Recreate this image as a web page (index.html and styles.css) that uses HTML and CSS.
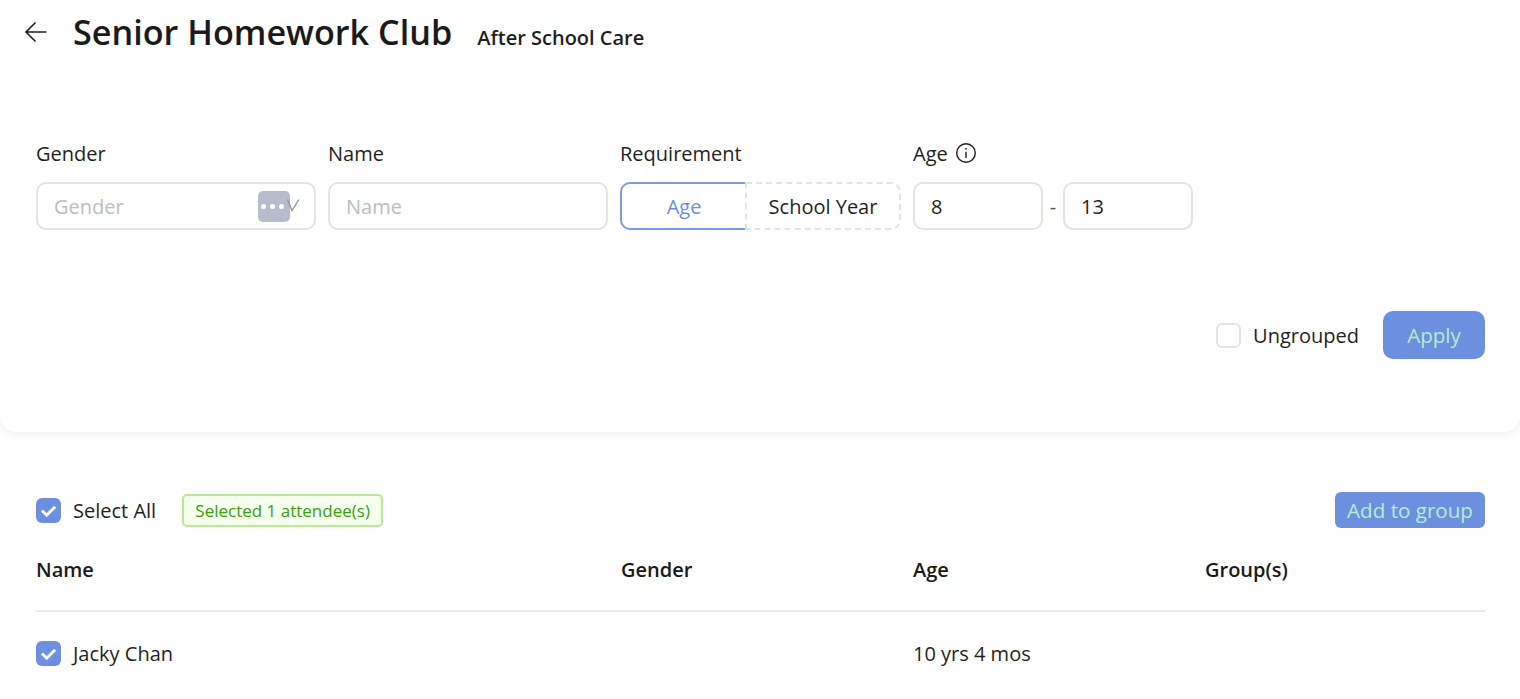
FILE: index.html
```html
<!DOCTYPE html>
<html>
  <head>
    <meta charset="utf-8">
    <title>Senior Homework Club</title>
    <link rel="stylesheet" href="styles.css">
  </head>
  <body>

    <section class="FilterCard">
      <header class="PageHead">
        <a href="#" class="PageHead-back" aria-label="Back">
          <svg width="24" height="24" viewBox="0 0 24 24" fill="none" stroke="#1f1f1f" stroke-width="1.6">
            <path d="M22.5 12H2M11.5 2.5L2 12l9.500 9.500" />
          </svg>
        </a>
        <h1>Senior Homework Club</h1>
        <span class="PageHead-sub">After School Care</span>
      </header>

      <div class="Filters">
        <div class="Field">
          <label>Gender</label>
          <div class="Input Input-select">
            <span class="Input-placeholder">Gender</span>
            <span class="Input-dots"><i></i><i></i><i></i></span>
            <svg class="Input-chevron" width="14" height="14" viewBox="0 0 14 14" fill="none" stroke="#8f93a0" stroke-width="1.3">
              <path d="M1.500 1.500L6 12.500 13 1.500" />
            </svg>
          </div>
        </div>
        <div class="Field">
          <label>Name</label>
          <div class="Input"><span class="Input-placeholder">Name</span></div>
        </div>
        <div class="Field">
          <label>Requirement</label>
          <div class="Toggle">
            <span class="Toggle-item Toggle-item-on">Age</span>
            <span class="Toggle-item">School Year</span>
          </div>
        </div>
        <div class="Field">
          <label>Age
            <svg width="22" height="22" viewBox="0 0 22 22" fill="none" stroke="#1f1f1f" stroke-width="1.4">
              <circle cx="11" cy="11" r="9.300" />
              <path d="M11 9.800v6.200" />
              <path d="M11 6v1.800" />
            </svg>
          </label>
          <div class="AgeRange">
            <div class="Input">8</div>
            <span class="AgeRange-dash">-</span>
            <div class="Input">13</div>
          </div>
        </div>
      </div>

      <div class="FilterActions">
        <span class="Check">
          <span class="Check-box"></span>
          Ungrouped
        </span>
        <button class="Btn Btn-apply">Apply</button>
      </div>
    </section>

    <section class="Attendees">
      <div class="Toolbar">
        <span class="Check">
          <span class="Check-box Check-box-on">
            <svg width="25" height="25" viewBox="0 0 25 25" fill="none" stroke="#fff" stroke-width="3"><path d="M6 12.500l4.700 4.700 8.500-8.500" /></svg>
          </span>
          Select All
        </span>
        <span class="Badge">Selected 1 attendee(s)</span>
        <button class="Btn Btn-add">Add to group</button>
      </div>

      <div class="Row Row-head">
        <span>Name</span>
        <span>Gender</span>
        <span>Age</span>
        <span>Group(s)</span>
      </div>
      <div class="Row">
        <span class="Check">
          <span class="Check-box Check-box-on">
            <svg width="25" height="25" viewBox="0 0 25 25" fill="none" stroke="#fff" stroke-width="3"><path d="M6 12.500l4.700 4.700 8.500-8.500" /></svg>
          </span>
          Jacky Chan
        </span>
        <span></span>
        <span>10 yrs 4 mos</span>
        <span></span>
      </div>
    </section>

  </body>
</html>
```

FILE: styles.css
```css
html, body {
  margin: 0;
  padding: 0;
  height: 699px;
  overflow: hidden;
  background: #fff;
  color: #1f1f1f;
  font-family: "Open Sans", "Noto Sans", Arial, sans-serif;
  font-size: 20px;
}

.FilterCard {
  height: 432px;
  box-sizing: border-box;
  padding: 0 35px 0 36px;
  border-radius: 0 0 16px 16px;
  box-shadow: 0 2px 10px rgba(0, 0, 0, 0.07);
}

.PageHead {
  display: flex;
  align-items: baseline;
  height: 66px;
  padding-top: 8px;
  box-sizing: border-box;
}
.PageHead-back {
  align-self: center;
  display: flex;
  width: 37px;
  margin-left: -12px;
  margin-top: -11px;
}
.PageHead h1 {
  margin: 0 25px 0 12px;
  font-size: 34.200px;
  font-weight: 600;
  color: #1a1a1a;
}
.PageHead-sub {
  font-size: 20px;
  font-weight: 600;
}

.Filters {
  display: grid;
  grid-template-columns: 280px 280px 281px 280px;
  column-gap: 12px;
  margin-top: 71px;
}
.Field label {
  display: flex;
  align-items: center;
  gap: 7px;
  height: 32px;
  margin-bottom: 13px;
}

.Input {
  position: relative;
  display: flex;
  align-items: center;
  height: 48px;
  box-sizing: border-box;
  padding: 0 16px;
  border: 2px solid #e3e3e3;
  border-radius: 10px;
}
.Input-placeholder {
  color: #bdbdbd;
}
.Input-chevron {
  position: absolute;
  left: 248px;
  top: 14px;
}
.Input-dots {
  position: absolute;
  left: 220px;
  top: 7px;
  display: flex;
  align-items: center;
  justify-content: center;
  gap: 4px;
  width: 32px;
  height: 31px;
  box-sizing: border-box;
  padding-right: 4px;
  border-radius: 5px;
  background: #b6bccb;
}
.Input-dots i {
  width: 5px;
  height: 5px;
  border-radius: 50%;
  background: #fff;
}

.Toggle {
  display: flex;
  height: 48px;
}
.Toggle-item {
  display: flex;
  align-items: center;
  justify-content: center;
  box-sizing: border-box;
  width: 156px;
  border: 2px dashed #e3e3e3;
  border-radius: 0 10px 10px 0;
  margin-left: -1px;
}
.Toggle-item-on {
  width: 126px;
  margin-left: 0;
  border: 2px solid #7a9ae2;
  border-right: 0;
  border-radius: 10px 0 0 10px;
  color: #6c8fdf;
}

.AgeRange {
  display: flex;
  align-items: center;
}
.AgeRange .Input {
  width: 130px;
}
.AgeRange-dash {
  width: 20px;
  text-align: center;
  color: #555;
}

.FilterActions {
  display: flex;
  justify-content: flex-end;
  align-items: center;
  gap: 24px;
  margin-top: 81px;
}

.Check {
  display: flex;
  align-items: center;
  gap: 12px;
}
.Check-box {
  width: 25px;
  height: 25px;
  box-sizing: border-box;
  border: 2px solid #e3e3e3;
  border-radius: 6px;
}
.Check-box-on {
  border: 0;
  background: #6c8fdf;
}
.Check-box svg {
  display: block;
}

.Btn {
  border: none;
  background: #6c8fdf;
  color: #b0f0cf;
  font-family: inherit;
  font-size: 20.600px;
  cursor: pointer;
}
.Btn-apply {
  width: 102px;
  height: 48px;
  border-radius: 10px;
}
.Btn-add {
  width: 150px;
  height: 36px;
  margin-left: auto;
  padding: 0;
  border-radius: 6px;
}

.Attendees {
  padding: 0 35px 0 36px;
}
.Toolbar {
  display: flex;
  align-items: center;
  gap: 26px;
  padding-top: 60px;
}
.Badge {
  display: flex;
  align-items: center;
  justify-content: center;
  width: 201px;
  height: 33px;
  box-sizing: border-box;
  border: 2px solid #b7eb8f;
  border-radius: 5px;
  background: #f6ffed;
  color: #389e0d;
  font-size: 17px;
}

.Row {
  display: grid;
  grid-template-columns: 585px 292px 292px 280px;
  align-items: center;
  height: 82px;
}
.Row-head {
  height: 82px;
  border-bottom: 2px solid #eaeaea;
  font-weight: 600;
  color: #1a1a1a;
}
```
